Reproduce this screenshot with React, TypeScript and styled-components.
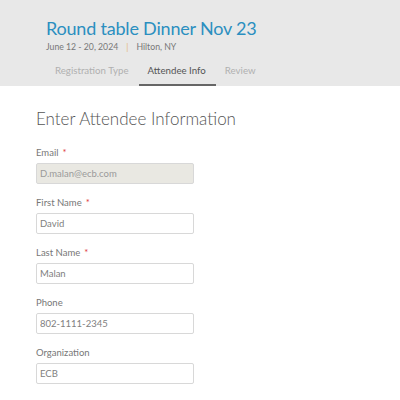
import React from 'react'
import styled, { createGlobalStyle } from 'styled-components'

const GlobalStyle = createGlobalStyle`
  html, body {
    margin: 0;
    padding: 0;
    background: #ffffff;
    font-family: Lato, "Noto Sans", sans-serif;
  }
`

const Header = styled.header`
  background: #e8e8e8;
  padding: 17px 0 0 46px;
  height: 86px;
  box-sizing: border-box;
  overflow: hidden;
`

const Title = styled.h1`
  margin: 0;
  font-size: 18px;
  font-weight: 400;
  color: #2b8fc0;
  line-height: 22px;
  letter-spacing: -0.2px;
`

const Meta = styled.div`
  display: flex;
  align-items: center;
  gap: 8px;
  font-size: 8.7px;
  color: #777;
  margin-top: 2px;
  line-height: 12px;
`

const Divider = styled.span`
  color: #e6b97a;
`

const Tabs = styled.nav`
  display: flex;
  margin-top: 3px;
`

const Tab = styled.div<{ $active?: boolean }>`
  padding: 0 10px 0 9px;
  height: 30px;
  display: flex;
  align-items: center;
  box-sizing: border-box;
  font-size: 9.7px;
  color: ${p => (p.$active ? '#555' : '#b0b0b0')};
  border-bottom: 2px solid ${p => (p.$active ? '#666' : 'transparent')};
`

const Body = styled.main`
  padding: 22px 0 0 36px;
`

const Heading = styled.h2`
  margin: 0 0 17px;
  font-size: 17px;
  line-height: 21px;
  font-weight: 300;
  color: #555;
`

const Field = styled.div`
  margin-bottom: 12.5px;
`

const Label = styled.label`
  display: block;
  font-size: 9.5px;
  color: #777;
  margin-bottom: 3.5px;
  line-height: 13px;
`

const Required = styled.span`
  color: #e04040;
  margin-left: 4px;
`

const Input = styled.input`
  display: block;
  width: 158px;
  height: 21px;
  box-sizing: border-box;
  border: 1px solid #d8d8d8;
  border-radius: 2px;
  padding: 0 3px;
  font-family: Lato, "Noto Sans", sans-serif;
  font-size: 9.5px;
  color: #808080;
  background: #fff;
  &:disabled {
    background: #e9e8e2;
    color: #9a9a9a;
  }
`

const fields = [
  { label: 'Email', value: 'D.malan@ecb.com', required: true, disabled: true },
  { label: 'First Name', value: 'David', required: true },
  { label: 'Last Name', value: 'Malan', required: true },
  { label: 'Phone', value: '802-1111-2345' },
  { label: 'Organization', value: 'ECB' },
]

export default function App() {
  return (
    <>
      <GlobalStyle />
      <Header>
        <Title>Round table Dinner Nov 23</Title>
        <Meta>
          <span>June 12 - 20, 2024</span>
          <Divider>|</Divider>
          <span>Hilton, NY</span>
        </Meta>
        <Tabs>
          <Tab>Registration Type</Tab>
          <Tab $active>Attendee Info</Tab>
          <Tab>Review</Tab>
        </Tabs>
      </Header>
      <Body>
        <Heading>Enter Attendee Information</Heading>
        {fields.map(f => (
          <Field key={f.label}>
            <Label>
              {f.label}
              {f.required && <Required>*</Required>}
            </Label>
            <Input defaultValue={f.value} disabled={f.disabled} readOnly />
          </Field>
        ))}
      </Body>
    </>
  )
}
